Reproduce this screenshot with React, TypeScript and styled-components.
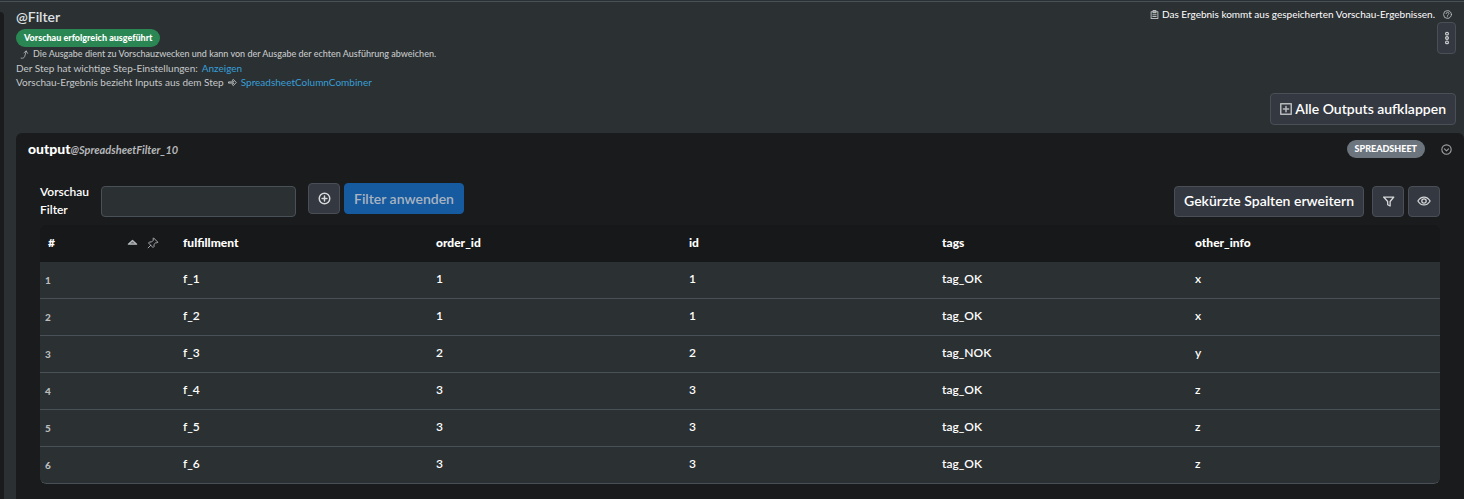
import React from "react";
import styled, { createGlobalStyle, css } from "styled-components";

const GlobalStyle = createGlobalStyle`
  * { box-sizing: border-box; }
  body {
    margin: 0;
    background: #2b3032;
    color: #fff;
    font-family: Lato, "Liberation Sans", sans-serif;
    font-size: 12px;
    line-height: 18px;
  }
  button, input { font: inherit; color: inherit; }
`;

const Shell = styled.div`
  display: flex;
  min-height: 100vh;
  padding-top: 1px;
`;

const Rail = styled.aside`
  width: 4px;
  flex: none;
  margin-top: 11px;
  background: #1a1b1c;
  border-top-right-radius: 4px;
`;

const Main = styled.main`
  flex: 1;
  min-width: 0;
  display: flex;
  flex-direction: column;
  padding-left: 12px;
`;

const TopLine = styled.div`
  height: 1px;
  background: #4a5057;
  margin: 0 0 0 -16px;
`;

const Header = styled.header`
  display: flex;
  justify-content: space-between;
  padding: 5px 8px 0 0;
`;

const Intro = styled.div`
  display: flex;
  flex-direction: column;
  align-items: flex-start;
  font-size: 10px;
  line-height: 14px;
  color: #c5c8ca;
`;

const Title = styled.h1`
  margin: 0;
  padding-bottom: 2px;
  font-size: 14px;
  line-height: 20px;
  font-weight: 600;
  color: #dfe1e3;
`;

const Badge = styled.span<{ $tone: "success" | "neutral" }>`
  display: inline-block;
  padding: 0 8px;
  border-radius: 9px;
  font-size: 9px;
  line-height: 18px;
  font-weight: 900;
  color: #fff;
  background: ${(p) => (p.$tone === "success" ? "#2a8753" : "#6c757d")};
`;

const Note = styled.p<{ $small?: boolean }>`
  margin: 0;
  display: flex;
  align-items: center;
  gap: 4px;
  min-height: 14px;
  ${(p) =>
    p.$small &&
    css`
      padding-left: 4px;
      font-size: 9px;
      font-weight: 500;
      line-height: 12px;
    `}
`;

const Link = styled.a`
  color: #379fd8;
  text-decoration: none;
`;

const Status = styled.div`
  display: flex;
  flex-direction: column;
  align-items: flex-end;
`;

const StatusText = styled.p`
  margin: 0;
  display: flex;
  align-items: center;
  gap: 3px;
  font-size: 10px;
  line-height: 15px;
`;

const IconSlot = styled.span<{ $help?: boolean }>`
  display: flex;
  padding: ${(p) => (p.$help ? "0 4px 0 5px" : "0")};
  color: #b6b9bc;
`;

const buttonLook = css`
  display: inline-flex;
  align-items: center;
  justify-content: center;
  gap: 3px;
  height: 32px;
  padding: 0;
  border: 1px solid #4a4f57;
  border-radius: 4px;
  background: #343840;
  white-space: nowrap;
`;

const IconButton = styled.button<{ $narrow?: boolean }>`
  ${buttonLook}
  width: ${(p) => (p.$narrow ? "19px" : "32px")};
  color: #d6d8da;
`;

const TextButton = styled.button<{ $primary?: boolean }>`
  ${buttonLook}
  padding: 0 9px;
  font-size: 14px;
  font-weight: 600;
  ${(p) =>
    p.$primary &&
    css`
      background: #165aa0;
      border-color: #165aa0;
      color: #a9b4c0;
    `}
`;

const ExpandRow = styled.div`
  display: flex;
  justify-content: flex-end;
  padding: 4px 8px 8px 0;
`;

const Card = styled.section`
  flex: 1;
  background: #1a1b1c;
  border-radius: 6px 6px 0 0;
  padding: 0 24px 15px;
`;

const CardHeader = styled.div`
  display: flex;
  align-items: center;
  justify-content: space-between;
  height: 32px;
  margin: 0 -12px;
`;

const OutputName = styled.h2`
  margin: 0;
  font-size: 14px;
  line-height: 18px;
  font-weight: 900;
`;

const StepName = styled.em`
  font-size: 11px;
  font-weight: 700;
  color: #b4b7ba;
`;

const CardTools = styled.div`
  display: flex;
  align-items: center;
  gap: 16px;
`;

const PlainButton = styled.button`
  display: inline-flex;
  padding: 0;
  border: 0;
  background: none;
  color: #9da0a3;
`;

const FilterBar = styled.div`
  display: flex;
  align-items: center;
  justify-content: space-between;
  padding: 18px 0 6px;
  input, button { height: 31px; }
`;

const Group = styled.div<{ $gap: number; $top?: boolean }>`
  display: flex;
  align-items: center;
  gap: ${(p) => p.$gap}px;
  align-self: ${(p) => (p.$top ? "flex-start" : "auto")};
`;

const FilterLabel = styled.label`
  width: 49px;
  font-weight: 600;
`;

const FilterInput = styled.input`
  width: 195px;
  padding: 0 8px;
  border: 1px solid #4a5057;
  border-radius: 4px;
  background: #2b3032;
`;

const Table = styled.table`
  width: 100%;
  table-layout: fixed;
  border-collapse: separate;
  border-spacing: 0;
  border-radius: 6px;
  overflow: hidden;
  text-align: left;
`;

const HeadCell = styled.th<{ $index?: boolean }>`
  height: 37px;
  padding: 0 8px 2px;
  background: #17181a;
  font-weight: 900;
  width: ${(p) => (p.$index ? "135px" : "auto")};
`;

const HeadContent = styled.div`
  display: flex;
  align-items: center;
  justify-content: space-between;
`;

const HeadIcons = styled.span`
  display: flex;
  align-items: center;
  gap: 9px;
  padding-right: 8px;
  color: #b6b9bc;
`;

const cellLook = css`
  height: 37px;
  background: #2b3032;
  border-bottom: 1px solid #4a5057;
`;

const Cell = styled.td`
  ${cellLook}
  padding: 0 8px 2px;
  font-weight: 600;
`;

const RowNumber = styled.th`
  ${cellLook}
  padding: 0 5px;
  font-size: 10px;
  font-weight: 900;
  color: #b9bcbe;
`;

const Body = styled.tbody`
  tr:last-child > :first-child { border-bottom-left-radius: 6px; }
  tr:last-child > :last-child { border-bottom-right-radius: 6px; }
`;

const Svg = styled.svg`
  flex: none;
  display: block;
  fill: none;
  stroke: currentColor;
  stroke-linecap: round;
  stroke-linejoin: round;
`;

type IconProps = { size: number; weight?: number; children: React.ReactNode };
const Icon = ({ size, weight = 1.4, children }: IconProps) => (
  <Svg width={size} height={size} viewBox="0 0 16 16" strokeWidth={weight} aria-hidden="true">
    {children}
  </Svg>
);

const columns = ["fulfillment", "order_id", "id", "tags", "other_info"];
const rows = [
  ["f_1", "1", "1", "tag_OK", "x"],
  ["f_2", "1", "1", "tag_OK", "x"],
  ["f_3", "2", "2", "tag_NOK", "y"],
  ["f_4", "3", "3", "tag_OK", "z"],
  ["f_5", "3", "3", "tag_OK", "z"],
  ["f_6", "3", "3", "tag_OK", "z"],
];

export default function App() {
  return (
    <>
      <GlobalStyle />
      <Shell>
        <Rail />
        <Main>
          <TopLine />
          <Header>
            <Intro>
              <Title>@Filter</Title>
              <Badge $tone="success">Vorschau erfolgreich ausgeführt</Badge>
              <Note $small>
                <Icon size={9} weight={1.3}>
                  <path d="M2 14.500h2.500c2 0 3.500-1.500 4-3.500L11 2M7 5l4-3.500L13.500 6" />
                </Icon>
                Die Ausgabe dient zu Vorschauzwecken und kann von der Ausgabe der echten Ausführung abweichen.
              </Note>
              <Note>
                Der Step hat wichtige Step-Einstellungen: <Link href="#settings">Anzeigen</Link>
              </Note>
              <Note>
                Vorschau-Ergebnis bezieht Inputs aus dem Step
                <Icon size={9} weight={1.6}>
                  <path d="M1.500 7H10L7.500 4.200 9.500 2.500 14.500 8l-5 5.500-2-1.700L10 9H1.500z" />
                </Icon>
                <Link href="#step">SpreadsheetColumnCombiner</Link>
              </Note>
            </Intro>
            <Status>
              <StatusText>
                <IconSlot>
                  <Icon size={9} weight={1.8}>
                    <path d="M2 3h12v12H2zM5.500 1h5v4h-5zM5 8.500h6M5 11.500h6" />
                  </Icon>
                </IconSlot>
                Das Ergebnis kommt aus gespeicherten Vorschau-Ergebnissen.
                <IconSlot $help>
                  <Icon size={9} weight={1.6}>
                    <circle cx="8" cy="8" r="7" />
                    <path d="M5.500 6.500C5.500 3 10.500 3 10.500 6.200 10.500 8 8 8 8 9.800M8 12v.2" />
                  </Icon>
                </IconSlot>
              </StatusText>
              <IconButton $narrow aria-label="Weitere Aktionen">
                <Icon size={14} weight={1.3}>
                  <circle cx="8" cy="3" r="1.600" />
                  <circle cx="8" cy="8" r="1.600" />
                  <circle cx="8" cy="13" r="1.600" />
                </Icon>
              </IconButton>
            </Status>
          </Header>
          <ExpandRow>
            <TextButton>
              <IconSlot>
                <Icon size={12} weight={2}>
                  <path d="M1 1h14v14H1zM8 4.500v7M4.500 8h7" />
                </Icon>
              </IconSlot>
              Alle Outputs aufklappen
            </TextButton>
          </ExpandRow>
          <Card>
            <CardHeader>
              <OutputName>
                output<StepName>@SpreadsheetFilter_10</StepName>
              </OutputName>
              <CardTools>
                <Badge $tone="neutral">SPREADSHEET</Badge>
                <PlainButton aria-label="Output zuklappen">
                  <Icon size={11} weight={1.6}>
                    <circle cx="8" cy="8" r="6.800" />
                    <path d="m5 7 3 3 3-3" />
                  </Icon>
                </PlainButton>
              </CardTools>
            </CardHeader>
            <FilterBar>
              <Group $gap={12}>
                <FilterLabel htmlFor="preview-filter">Vorschau Filter</FilterLabel>
                <FilterInput id="preview-filter" type="text" />
                <Group $gap={4} $top>
                  <IconButton aria-label="Filter hinzufügen">
                    <Icon size={13} weight={1.8}>
                      <circle cx="8" cy="8" r="6.500" />
                      <path d="M8 5v6M5 8h6" />
                    </Icon>
                  </IconButton>
                  <TextButton $primary>Filter anwenden</TextButton>
                </Group>
              </Group>
              <Group $gap={8}>
                <TextButton>Gekürzte Spalten erweitern</TextButton>
                <Group $gap={4}>
                  <IconButton aria-label="Filtern">
                    <Icon size={13} weight={1.6}>
                      <path d="M2 2.500h12.500L10 8v5.500l-3-1.500V8z" />
                    </Icon>
                  </IconButton>
                  <IconButton aria-label="Spalten anzeigen">
                    <Icon size={14}>
                      <path d="M1 8c3.500-6 10.500-6 14 0-3.500 6-10.500 6-14 0z" />
                      <circle cx="8" cy="8" r="2.500" />
                    </Icon>
                  </IconButton>
                </Group>
              </Group>
            </FilterBar>
            <Table>
              <thead>
                <tr>
                  <HeadCell $index scope="col">
                    <HeadContent>
                      #
                      <HeadIcons>
                        <Icon size={11} weight={1.8}>
                          <path d="M2 10.500 8 5l6 5.500z" fill="#6c6f72" />
                        </Icon>
                        <Icon size={12} weight={1.2}>
                          <path d="m9 1.500 5.500 5.500-1.500.8-1.200-.3-2.600 2.600.3 2.400-1.500 1.500L2 8l1.500-1.500 2.400.3 2.600-2.600L8.200 3zM5 11l-3.500 3.500" />
                        </Icon>
                      </HeadIcons>
                    </HeadContent>
                  </HeadCell>
                  {columns.map((name) => (
                    <HeadCell key={name} scope="col">{name}</HeadCell>
                  ))}
                </tr>
              </thead>
              <Body>
                {rows.map((row, i) => (
                  <tr key={row[0]}>
                    <RowNumber scope="row">{i + 1}</RowNumber>
                    {row.map((value, j) => (
                      <Cell key={columns[j]}>{value}</Cell>
                    ))}
                  </tr>
                ))}
              </Body>
            </Table>
          </Card>
        </Main>
      </Shell>
    </>
  );
}
